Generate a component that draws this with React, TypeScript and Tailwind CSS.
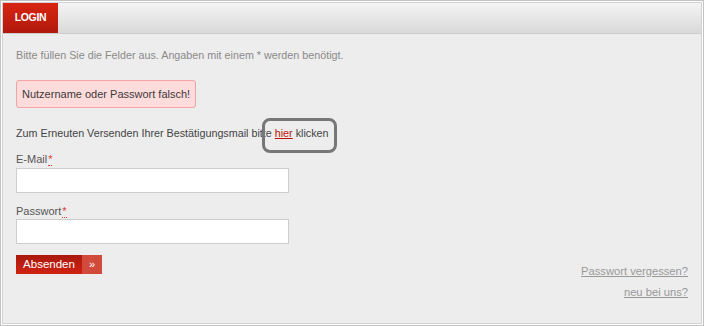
import { FC } from "react";

const Req: FC = () => (
    <abbr title="Pflichtfeld" className="ml-px text-[#e03a3a] no-underline border-b border-dotted border-[#e03a3a] leading-none">*</abbr>
);

export default function App() {
    return (
        <div className="h-[326px] w-[704px] border border-[#c3c3c3] bg-white p-px font-['Liberation_Sans',Arial,sans-serif]">
            <div className="relative flex h-full flex-col border border-[#d3d3d3] bg-[#ededed]">
                <div className="flex h-[31px] border-b border-[#cdcdcd] bg-gradient-to-b from-[#f4f4f4] to-[#d9d9d9]">
                    <div className="flex w-[55px] items-center justify-center bg-gradient-to-b from-[#d92512] to-[#b0190b] text-[10.5px] font-bold tracking-[-0.3px] text-white">
                        LOGIN
                    </div>
                </div>

                <div className="flex flex-col pl-[13px] pr-[13px] pt-[13px]">
                    <p className="text-[10.75px] leading-[16px] text-[#8a8a8a]">
                        Bitte füllen Sie die Felder aus. Angaben mit einem * werden benötigt.
                    </p>

                    <div className="mt-[17px] flex h-[28px] w-fit items-center rounded-[3px] border border-[#f3a3a3] bg-[#ffdcdc] px-[5px] text-[11px] text-[#3a3a3a]">
                        Nutzername oder Passwort falsch!
                    </div>

                    <p className="mt-[17px] text-[10.75px] leading-[16px] text-[#444]">
                        Zum Erneuten Versenden Ihrer Bestätigungsmail bitte <a className="text-[#c0100a] underline">hier</a> klicken
                    </p>

                    <label className="mt-[10px] text-[11px] leading-[16px] text-[#555]">
                        E-Mail<Req />
                    </label>
                    <input type="text" className="mt-px h-[25px] w-[273px] border border-[#cdcdcd] bg-white outline-none" />

                    <label className="mt-[10px] text-[11px] leading-[16px] text-[#555]">
                        Passwort<Req />
                    </label>
                    <input type="password" className="h-[25px] w-[273px] border border-[#cdcdcd] bg-white outline-none" />

                    <div className="mt-[11px] flex items-start justify-between">
                        <button className="flex h-[19px] text-[11.5px] text-white">
                            <span className="flex h-full w-[66px] items-center justify-center bg-gradient-to-b from-[#a91a0d] to-[#d02212]">Absenden</span>
                            <span className="flex h-full w-[20px] items-center justify-center bg-[#d14a3c] text-[11px]">»</span>
                        </button>
                        <div className="flex flex-col items-end gap-[5px] pt-[8px] text-[11.2px] leading-[16px] text-[#999]">
                            <a className="underline">Passwort vergessen?</a>
                            <a className="underline">neu bei uns?</a>
                        </div>
                    </div>
                </div>

                <div className="absolute left-[259px] top-[115px] h-[35px] w-[75px] rounded-[8px] border-[3px] border-[#777]" />
            </div>
        </div>
    );
}
